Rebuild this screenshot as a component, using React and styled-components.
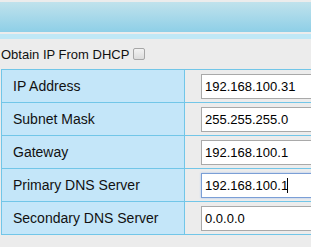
import React from "react";
import styled, { createGlobalStyle } from "styled-components";

const rows = [
  { label: "IP Address", value: "192.168.100.31" },
  { label: "Subnet Mask", value: "255.255.255.0" },
  { label: "Gateway", value: "192.168.100.1" },
  { label: "Primary DNS Server", value: "192.168.100.1", focused: true },
  { label: "Secondary DNS Server", value: "0.0.0.0" },
];

function App() {
  return (
    <Page>
      <GlobalStyle />
      <TitleBar />
      <SubBar />
      <DhcpRow>
        <span>Obtain IP From DHCP</span>
        <Check />
      </DhcpRow>
      <Table>
        <tbody>
          {rows.map((r) => (
            <tr key={r.label}>
              <Label>{r.label}</Label>
              <Field>
                <InputWrap>
                  <Input defaultValue={r.value} $focused={r.focused} />
                  {r.focused && <Caret />}
                </InputWrap>
              </Field>
            </tr>
          ))}
        </tbody>
      </Table>
    </Page>
  );
}

/* Page styling */
const GlobalStyle = createGlobalStyle`
  body {
    margin: 0;
    background: #ececec;
    font-family: "Liberation Sans", Arial, sans-serif;
    overflow: clip;
  }
`;

const Page = styled.div`
  width: 311px;
  height: 247px;
  overflow: clip;
  background: #ececec;
  padding-top: 2px;
  box-sizing: border-box;
`;

const TitleBar = styled.div`
  height: 30px;
  width: 100%;
  background: linear-gradient(to bottom, #c0e2ec, #8ecfe7);
`;

const SubBar = styled.div`
  height: 5px;
  margin-top: 2px;
  background: #c0e8f6;
`;

const DhcpRow = styled.div`
  height: 30px;
  display: flex;
  align-items: center;
  gap: 4px;
  padding-left: 1px;
  font-size: 13px;
  color: #111;
`;

const Check = styled.span`
  display: inline-block;
  width: 10px;
  height: 10px;
  margin-top: -1px;
  border: 1px solid #a6a6a6;
  border-radius: 2px;
  background: linear-gradient(to bottom, #f2f2f2, #dcdcdc);
`;

const Table = styled.table`
  border-collapse: collapse;
  margin-left: 1px;
  width: 420px;
  table-layout: fixed;
`;

const Label = styled.td`
  width: 171px;
  height: 32px;
  padding: 0 0 0 11px;
  background: #c4e6f9;
  border: 1px solid #72c6e8;
  font-size: 14px;
  color: #111;
  vertical-align: middle;
`;

const Field = styled.td`
  padding: 0 0 0 16px;
  border: 1px solid #72c6e8;
  height: 32px;
  vertical-align: middle;
`;

const InputWrap = styled.div`
  position: relative;
  width: 200px;
  margin-top: 1px;
`;

const Input = styled.input`
  display: block;
  box-sizing: border-box;
  width: 100%;
  height: 25px;
  padding: 0 3px;
  border: 1px solid ${(p) => (p.$focused ? "#7b9fd6" : "#a9a9a9")};
  box-shadow: ${(p) => (p.$focused ? "0 0 2px #a9c4ee" : "none")};
  background: #fff;
  font-family: "Liberation Sans", Arial, sans-serif;
  font-size: 13px;
  color: #000;
  outline: none;
`;

const Caret = styled.span`
  position: absolute;
  left: 86px;
  top: 5px;
  width: 1px;
  height: 15px;
  background: #000;
`;

export default App;
